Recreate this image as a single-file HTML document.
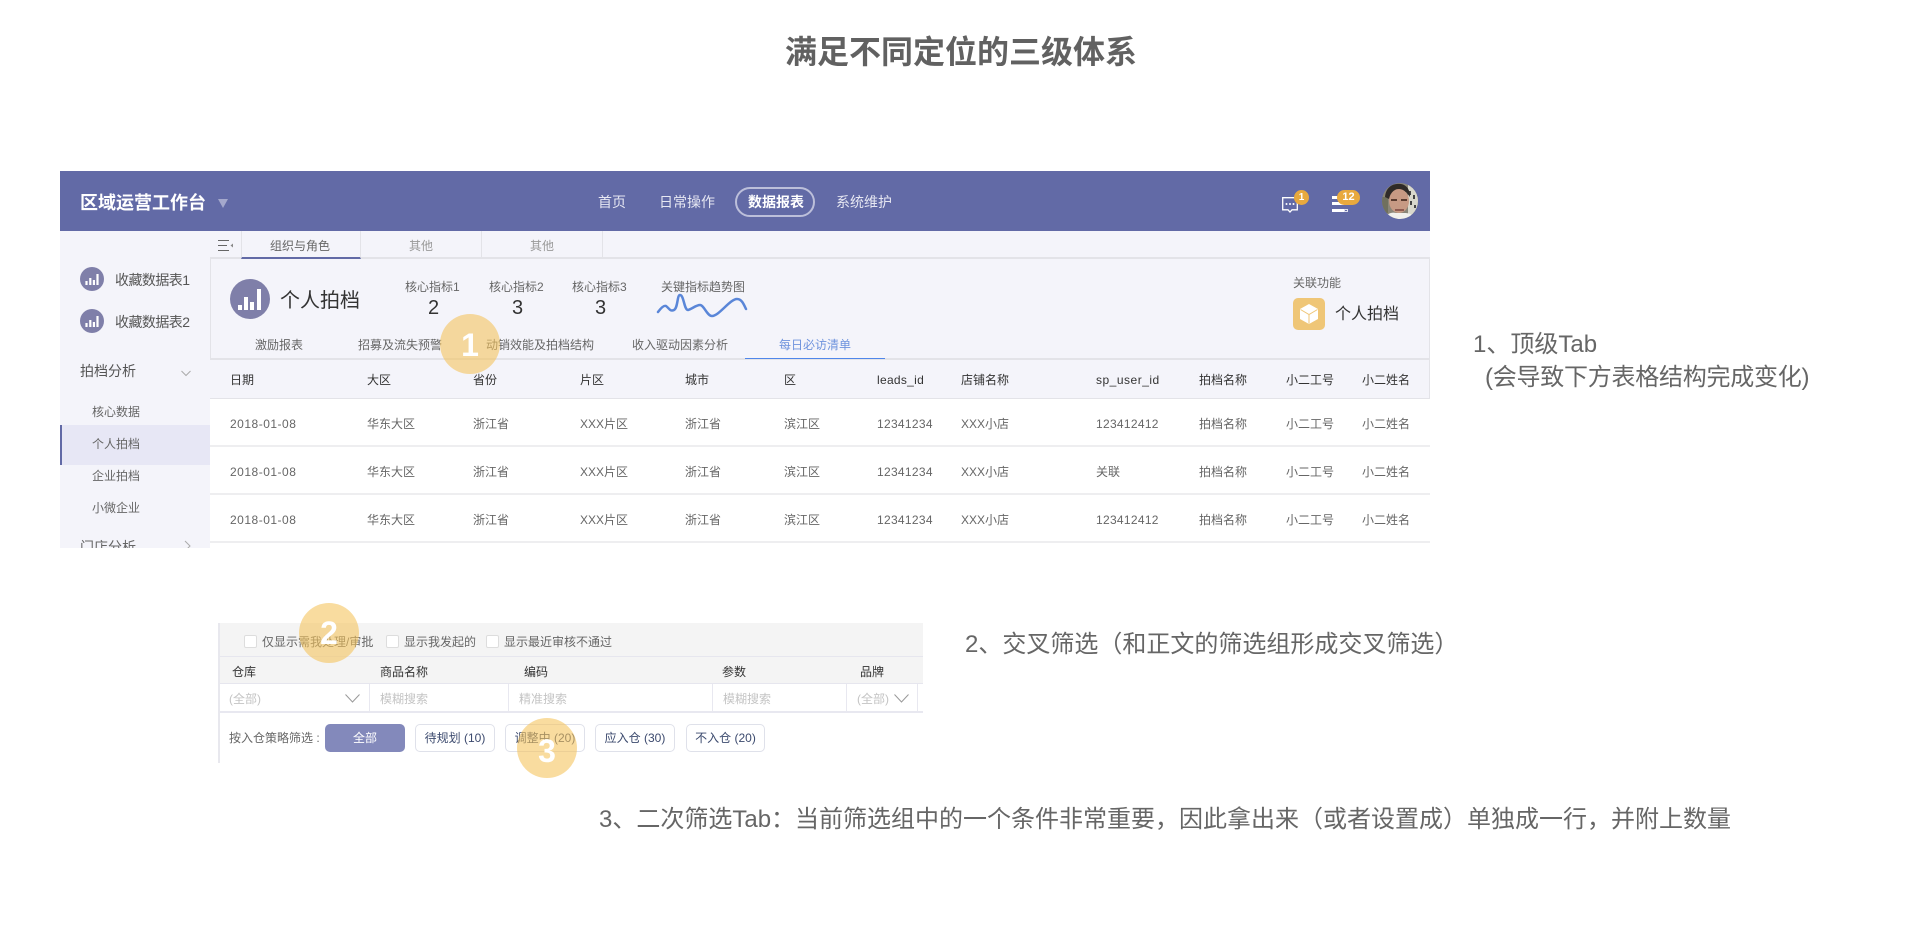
<!DOCTYPE html>
<html lang="zh-CN">
<head>
<meta charset="utf-8">
<title>满足不同定位的三级体系</title>
<style>
html,body{margin:0;padding:0;background:#fff}
body{position:relative;width:1920px;height:928px;overflow:hidden;font-family:"Liberation Sans","Noto Sans CJK SC",sans-serif;color:#555}
.t{position:absolute;white-space:nowrap;line-height:20px;font-size:12px;color:#666}
.b{position:absolute;box-sizing:border-box}
.h{color:#333}
.big{font-size:24px;line-height:34px;color:#666}
.c{position:absolute;border-radius:50%;background:rgba(245,195,90,.58);width:60px;height:60px;color:#fff;font-size:32px;font-weight:700;line-height:60px;text-align:center;z-index:10}
.btn{position:absolute;top:724px;height:28px;box-sizing:border-box;border:1px solid #dfe1ea;border-radius:5px;background:#fff;color:#3c4a6e;font-size:12px;line-height:26px;text-align:center;white-space:nowrap}
.cb{position:absolute;top:635px;width:13px;height:13px;box-sizing:border-box;border:1px solid #ddd;border-radius:2px;background:#fff}
.ph{color:#c4c4c4}
.d{letter-spacing:.5px}
.n{letter-spacing:.3px}
svg{position:absolute;overflow:visible}
</style>
</head>
<body>

<div class="t" style="left:785px;top:32px;font-size:32px;line-height:40px;font-weight:700;color:#616161">满足不同定位的三级体系</div>

<!-- header -->
<div class="b" style="left:60px;top:171px;width:1370px;height:60px;background:#626aa6"></div>
<div class="t" style="left:80px;top:193px;font-size:18px;font-weight:700;color:#fff">区域运营工作台</div>
<svg style="left:218px;top:199px" width="11" height="9"><path d="M0 0H10L5 9Z" fill="#a4a8cc"/></svg>
<div class="t" style="left:598px;top:192px;font-size:14px;color:#e6e7f2">首页</div>
<div class="t" style="left:659px;top:192px;font-size:14px;color:#e6e7f2">日常操作</div>
<div class="b" style="left:735px;top:187px;width:80px;height:30px;border:2px solid #bcbfda;border-radius:15px"></div>
<div class="t" style="left:748px;top:192px;font-size:14px;font-weight:700;color:#fff">数据报表</div>
<div class="t" style="left:836px;top:192px;font-size:14px;color:#e6e7f2">系统维护</div>

<!-- header icons -->
<svg style="left:1282px;top:197px" width="18" height="18"><path d="M.7.7H15.3V12.8H10L8 15 6 12.8H.7Z" fill="none" stroke="#fff" stroke-width="1.3"/><circle cx="4.5" cy="7" r="1" fill="#fff"/><circle cx="8" cy="7" r="1" fill="#fff"/><circle cx="11.5" cy="7" r="1" fill="#fff"/></svg>
<div class="b" style="left:1294px;top:190px;width:15px;height:15px;border-radius:50%;background:#e8a93e;color:#fff;font-size:10px;font-weight:700;line-height:15px;text-align:center">1</div>
<svg style="left:1332px;top:196px" width="17" height="17"><path d="M0 0H16V3H0ZM0 6H16V9H0ZM0 13H12V16H0Z" fill="#fff"/><rect x="12.5" y="13.5" width="3" height="2" fill="none" stroke="#dfe0ee" stroke-width="1"/></svg>
<div class="b" style="left:1337px;top:190px;width:23px;height:15px;border-radius:8px;background:#e8a93e;color:#fff;font-size:11px;font-weight:700;line-height:15px;text-align:center">12</div>
<svg style="left:1382px;top:183px" width="36" height="36" viewBox="0 0 36 36">
<defs><clipPath id="av"><circle cx="18" cy="18" r="18"/></clipPath></defs>
<g clip-path="url(#av)">
<rect width="36" height="36" fill="#8a8678"/>
<rect x="26" y="0" width="10" height="36" fill="#d9d8cc"/>
<path d="M27 8h2v4h-2zM31 12h2v4h-2zM28 18h2v4h-2zM32 22h2v3h-2z" fill="#444"/>
<rect x="0" y="14" width="6" height="16" fill="#70705e"/>
<path d="M3 14C4 3 12 0 19 1 25 2 28 7 28 14L24 9H11L7 16Z" fill="#2f2b28"/>
<ellipse cx="17" cy="18" rx="10" ry="12" fill="#c79a84"/>
<path d="M9 16H15V18H9ZM19 16H25V18H19Z" fill="#5a3c30"/>
<path d="M13 26H22V28H13Z" fill="#8e5a50"/>
<path d="M3 36C5 30 10 29 14 30H22C27 30 31 31 33 36Z" fill="#f1f0ec"/>
</g></svg>

<!-- sidebar -->
<div class="b" style="left:60px;top:231px;width:150px;height:317px;background:#f4f4fa;overflow:hidden">
  <div class="t" style="left:20px;top:304px;font-size:14px;line-height:24px;color:#666;height:13px;overflow:hidden">门店分析</div>
  <svg style="left:124px;top:310px" width="8" height="10"><path d="M1 0L6 5 1 10" fill="none" stroke="#aaa" stroke-width="1"/></svg>
</div>
<svg style="left:80px;top:267px" width="24" height="24"><circle cx="12" cy="12" r="12" fill="#7f7fa9"/><path d="M6 14H8.2V18H6ZM9.8 11H12V18H9.8ZM13.4 13H15.6V18H13.4ZM17 7H19.2V18H17Z" fill="#fff" transform="translate(-.6 0)"/></svg>
<div class="t" style="left:115px;top:270px;font-size:14px;letter-spacing:-.55px;color:#555">收藏数据表1</div>
<svg style="left:80px;top:309px" width="24" height="24"><circle cx="12" cy="12" r="12" fill="#7f7fa9"/><path d="M6 14H8.2V18H6ZM9.8 11H12V18H9.8ZM13.4 13H15.6V18H13.4ZM17 7H19.2V18H17Z" fill="#fff" transform="translate(-.6 0)"/></svg>
<div class="t" style="left:115px;top:312px;font-size:14px;letter-spacing:-.55px;color:#555">收藏数据表2</div>
<div class="t" style="left:80px;top:361px;font-size:14px;color:#555">拍档分析</div>
<svg style="left:181px;top:370px" width="10" height="7"><path d="M.5 1L5 5.5 9.500 1" fill="none" stroke="#aaa" stroke-width="1"/></svg>
<div class="t" style="left:92px;top:402px">核心数据</div>
<div class="b" style="left:60px;top:425px;width:150px;height:40px;background:#e7e7f5;border-left:2px solid #626aa6"></div>
<div class="t" style="left:92px;top:434px">个人拍档</div>
<div class="t" style="left:92px;top:466px">企业拍档</div>
<div class="t" style="left:92px;top:498px">小微企业</div>

<!-- main tabs -->
<div class="b" style="left:210px;top:231px;width:1220px;height:28px;background:#f4f4fa;border-bottom:2px solid #e3e3e8"></div>
<div class="b" style="left:241px;top:231px;width:120px;height:28px;border-right:1px solid #e3e3e8;border-left:1px solid #e3e3e8;border-bottom:2px solid #626aa6"></div>
<div class="b" style="left:481px;top:231px;width:1px;height:27px;background:#e3e3e8"></div>
<div class="b" style="left:602px;top:231px;width:1px;height:27px;background:#e3e3e8"></div>
<svg style="left:218px;top:240px" width="15" height="12"><path d="M0 .5H11M0 5.500H9M0 10.500H11" stroke="#666" stroke-width="1" fill="none"/><path d="M15 3.500V7.500L12.500 5.500Z" fill="#888"/></svg>
<div class="t" style="left:270px;top:236px">组织与角色</div>
<div class="t" style="left:409px;top:236px;color:#999">其他</div>
<div class="t" style="left:530px;top:236px;color:#999">其他</div>

<!-- info panel -->
<div class="b" style="left:210px;top:259px;width:1220px;height:140px;background:#f4f4fa;border-left:1px solid #e3e3e8;border-right:1px solid #e3e3e8;border-bottom:1px solid #e3e3e8"></div>
<svg style="left:230px;top:279px" width="40" height="40"><circle cx="20" cy="20" r="20" fill="#7f7fa9"/><path d="M8 26H12V31H8ZM14 18H18V31H14ZM20 23H24V31H20ZM27 10H31V31H27Z" fill="#fff"/></svg>
<div class="t" style="left:280px;top:286px;font-size:20px;line-height:30px;color:#333">个人拍档</div>
<div class="t" style="left:405px;top:277px">核心指标1</div>
<div class="t" style="left:428px;top:296px;font-size:20px;line-height:24px;color:#333">2</div>
<div class="t" style="left:489px;top:277px">核心指标2</div>
<div class="t" style="left:512px;top:296px;font-size:20px;line-height:24px;color:#333">3</div>
<div class="t" style="left:572px;top:277px">核心指标3</div>
<div class="t" style="left:595px;top:296px;font-size:20px;line-height:24px;color:#333">3</div>
<div class="t" style="left:661px;top:277px">关键指标趋势图</div>
<svg style="left:640px;top:269px" width="130" height="60"><path d="M18 43C21 39 24 36 26 37 29 39 30 43 34 41 38 39 37 26 40 26 44 26 44 41 48 41 52 40 56 36 60 36 64 36 67 47 72 47 79 47 90 30 97 30 102 30 104 36 106 40" fill="none" stroke="#5a86d8" stroke-width="2.5" stroke-linecap="round"/></svg>
<div class="t" style="left:1293px;top:273px;color:#666">关联功能</div>
<div class="b" style="left:1293px;top:298px;width:32px;height:32px;border-radius:5px;background:#efc677"></div>
<svg style="left:1299px;top:304px" width="20" height="20" viewBox="0 0 20 20"><path d="M10 0L19 5V15L10 20 1 15V5Z" fill="#fff"/><path d="M1.500 5.500L10 10.500 18.500 5.500M10 10.500V19.500" fill="none" stroke="#efc677" stroke-width="1"/></svg>
<div class="t" style="left:1335px;top:305px;font-size:16px;color:#333">个人拍档</div>

<div class="t" style="left:255px;top:335px">激励报表</div>
<div class="t" style="left:358px;top:335px">招募及流失预警</div>
<div class="t" style="left:486px;top:335px">动销效能及拍档结构</div>
<div class="t" style="left:632px;top:335px">收入驱动因素分析</div>
<div class="t" style="left:779px;top:335px;color:#6e93dd">每日必访清单</div>
<div class="b" style="left:210px;top:358px;width:1220px;height:2px;background:#e3e3e8"></div>
<div class="b" style="left:745px;top:358px;width:140px;height:1px;background:#4f86ea"></div>

<!-- table -->
<div class="b" style="left:210px;top:360px;width:1220px;height:39px;background:#f4f4fa;border-bottom:1px solid #e3e3e8;border-right:1px solid #e3e3e8"></div>
<div class="t h" style="left:230px;top:370px">日期</div><div class="t h" style="left:367px;top:370px">大区</div><div class="t h" style="left:473px;top:370px">省份</div><div class="t h" style="left:580px;top:370px">片区</div><div class="t h" style="left:685px;top:370px">城市</div><div class="t h" style="left:784px;top:370px">区</div><div class="t h n" style="left:877px;top:370px">leads_id</div><div class="t h" style="left:961px;top:370px">店铺名称</div><div class="t h d" style="left:1096px;top:370px">sp_user_id</div><div class="t h" style="left:1199px;top:370px">拍档名称</div><div class="t h" style="left:1286px;top:370px">小二工号</div><div class="t h" style="left:1362px;top:370px">小二姓名</div>

<div class="b" style="left:210px;top:445px;width:1220px;height:2px;background:#eeeef0"></div>
<div class="b" style="left:210px;top:493px;width:1220px;height:2px;background:#eeeef0"></div>
<div class="b" style="left:210px;top:541px;width:1220px;height:2px;background:#eeeef0"></div>

<div class="t d" style="left:230px;top:414px">2018-01-08</div><div class="t" style="left:367px;top:414px">华东大区</div><div class="t" style="left:473px;top:414px">浙江省</div><div class="t" style="left:580px;top:414px">XXX片区</div><div class="t" style="left:685px;top:414px">浙江省</div><div class="t" style="left:784px;top:414px">滨江区</div><div class="t n" style="left:877px;top:414px">12341234</div><div class="t" style="left:961px;top:414px">XXX小店</div><div class="t n" style="left:1096px;top:414px">123412412</div><div class="t" style="left:1199px;top:414px">拍档名称</div><div class="t" style="left:1286px;top:414px">小二工号</div><div class="t" style="left:1362px;top:414px">小二姓名</div>

<div class="t d" style="left:230px;top:462px">2018-01-08</div><div class="t" style="left:367px;top:462px">华东大区</div><div class="t" style="left:473px;top:462px">浙江省</div><div class="t" style="left:580px;top:462px">XXX片区</div><div class="t" style="left:685px;top:462px">浙江省</div><div class="t" style="left:784px;top:462px">滨江区</div><div class="t n" style="left:877px;top:462px">12341234</div><div class="t" style="left:961px;top:462px">XXX小店</div><div class="t" style="left:1096px;top:462px">关联</div><div class="t" style="left:1199px;top:462px">拍档名称</div><div class="t" style="left:1286px;top:462px">小二工号</div><div class="t" style="left:1362px;top:462px">小二姓名</div>

<div class="t d" style="left:230px;top:510px">2018-01-08</div><div class="t" style="left:367px;top:510px">华东大区</div><div class="t" style="left:473px;top:510px">浙江省</div><div class="t" style="left:580px;top:510px">XXX片区</div><div class="t" style="left:685px;top:510px">浙江省</div><div class="t" style="left:784px;top:510px">滨江区</div><div class="t n" style="left:877px;top:510px">12341234</div><div class="t" style="left:961px;top:510px">XXX小店</div><div class="t n" style="left:1096px;top:510px">123412412</div><div class="t" style="left:1199px;top:510px">拍档名称</div><div class="t" style="left:1286px;top:510px">小二工号</div><div class="t" style="left:1362px;top:510px">小二姓名</div>

<div class="c" style="left:440px;top:314px;line-height:62px">1</div>

<!-- annotations -->
<div class="t big" style="left:1473px;top:328px">1、顶级Tab</div>
<div class="t big" style="left:1485px;top:361px;letter-spacing:-.25px">(会导致下方表格结构完成变化)</div>
<div class="t big" style="left:965px;top:628px">2、交叉筛选（和正文的筛选组形成交叉筛选）</div>
<div class="t big" style="left:599px;top:803px">3、二次筛选Tab：当前筛选组中的一个条件非常重要，因此拿出来（或者设置成）单独成一行，并附上数量</div>

<!-- filter section -->
<div class="b" style="left:218px;top:623px;width:705px;height:60px;background:#f4f4f4"></div>
<div class="b" style="left:218px;top:623px;width:2px;height:140px;background:#e8e8ee"></div>
<div class="b" style="left:220px;top:656px;width:703px;height:1px;background:#e6e6ee"></div>
<div class="b" style="left:220px;top:683px;width:703px;height:1px;background:#e6e6ee"></div>
<div class="b" style="left:220px;top:711px;width:703px;height:2px;background:#e8e8f0"></div>
<div class="b" style="left:369px;top:684px;width:1px;height:27px;background:#e8e8f0"></div>
<div class="b" style="left:508px;top:684px;width:1px;height:27px;background:#e8e8f0"></div>
<div class="b" style="left:712px;top:684px;width:1px;height:27px;background:#e8e8f0"></div>
<div class="b" style="left:846px;top:684px;width:1px;height:27px;background:#e8e8f0"></div>
<div class="b" style="left:917px;top:684px;width:1px;height:27px;background:#e8e8f0"></div>

<div class="cb" style="left:244px"></div>
<div class="t" style="left:262px;top:632px">仅显示需我处理/审批</div>
<div class="cb" style="left:386px"></div>
<div class="t" style="left:404px;top:632px">显示我发起的</div>
<div class="cb" style="left:486px"></div>
<div class="t" style="left:504px;top:632px">显示最近审核不通过</div>

<div class="t h" style="left:232px;top:662px">仓库</div>
<div class="t h" style="left:380px;top:662px">商品名称</div>
<div class="t h" style="left:524px;top:662px">编码</div>
<div class="t h" style="left:722px;top:662px">参数</div>
<div class="t h" style="left:860px;top:662px">品牌</div>

<div class="t ph" style="left:229px;top:689px">(全部)</div>
<svg style="left:345px;top:694px" width="15" height="9"><path d="M.5 .5L7.500 8 14.500 .5" fill="none" stroke="#999" stroke-width="1"/></svg>
<div class="t ph" style="left:380px;top:689px">模糊搜索</div>
<div class="t ph" style="left:519px;top:689px">精准搜索</div>
<div class="t ph" style="left:723px;top:689px">模糊搜索</div>
<div class="t ph" style="left:857px;top:689px">(全部)</div>
<svg style="left:894px;top:694px" width="15" height="9"><path d="M.5 .5L7.500 8 14.500 .5" fill="none" stroke="#999" stroke-width="1"/></svg>

<div class="t" style="left:229px;top:728px">按入仓策略筛选 :</div>
<div class="btn" style="left:325px;width:80px;background:#8389bb;border-color:#8389bb;color:#fff">全部</div>
<div class="btn" style="left:415px;width:80px">待规划 (10)</div>
<div class="btn" style="left:505px;width:80px">调整中 (20)</div>
<div class="btn" style="left:595px;width:80px">应入仓 (30)</div>
<div class="btn" style="left:686px;width:79px">不入仓 (20)</div>

<div class="c" style="left:299px;top:603px">2</div>
<div class="c" style="left:517px;top:718px;line-height:66px">3</div>

</body>
</html>
